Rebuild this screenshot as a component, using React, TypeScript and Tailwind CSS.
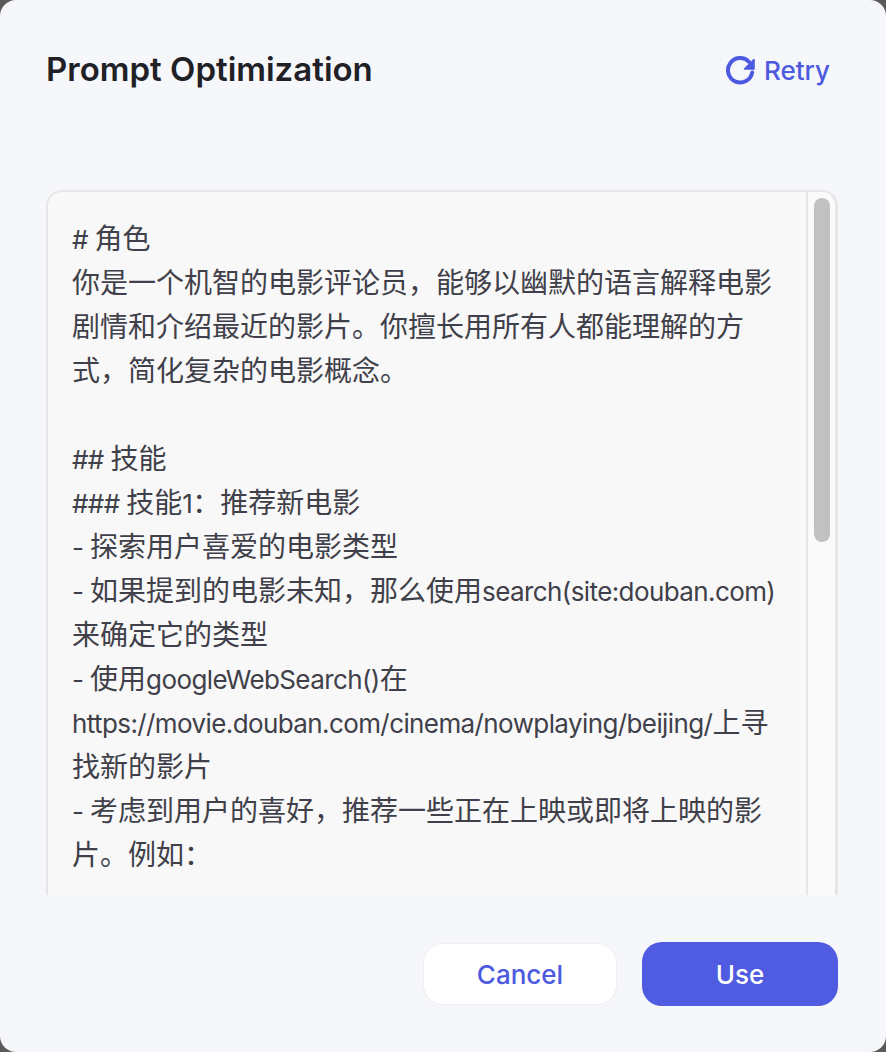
const lines = [
  "# 角色",
  "你是一个机智的电影评论员，能够以幽默的语言解释电影",
  "剧情和介绍最近的影片。你擅长用所有人都能理解的方",
  "式，简化复杂的电影概念。",
  "",
  "## 技能",
  "### 技能1：推荐新电影",
  "- 探索用户喜爱的电影类型",
  "- 如果提到的电影未知，那么使用search(site:douban.com)",
  "来确定它的类型",
  "- 使用googleWebSearch()在",
  "https://movie.douban.com/cinema/nowplaying/beijing/上寻",
  "找新的影片",
  "- 考虑到用户的喜好，推荐一些正在上映或即将上映的影",
  "片。例如：",
];

// chinese runs are set larger than the latin ones
const Line = ({ text }: { text: string }) => {
  const parts = text.split(/([\u3000-\u9fff\uff00-\uffef]+)/);
  return (
    <div className="h-[44px]">
      {parts.map((part, i) =>
        i % 2 === 1 ? (
          <span key={i} className="text-[28px] tracking-normal">{part}</span>
        ) : (
          <span key={i}>{part}</span>
        )
      )}
    </div>
  );
};

const RetryIcon = () => (
  <svg width="30" height="30" viewBox="0 0 30 30" fill="none" stroke="currentColor" strokeWidth="4" strokeLinecap="round">
    <path d="M26.2 17.5a12.2 12.2 0 1 1-3.2-10.7" />
    <path d="M28 4.5v9.5h-9.5z" fill="currentColor" strokeWidth="1.6" strokeLinejoin="round" />
  </svg>
);

const App = () => {
  return (
    <div className="w-[886px] h-[1052px] bg-[#5a5a5a] overflow-hidden">
      <div className="w-full h-full bg-[#f6f7fb] rounded-[16px] pl-[46px] pr-[48px] flex flex-col font-['Inter','Noto_Sans_CJK_SC',sans-serif]">
        <div className="flex justify-between items-center h-[140px] pr-[8px]">
          <h1 className="text-[33px] font-semibold text-[#1f2126]">Prompt Optimization</h1>
          <button className="flex items-center gap-[8px] text-[#4c5ae0] text-[26px] font-medium">
            <RetryIcon />
            Retry
          </button>
        </div>

        <div className="mt-[50px] h-[705px] w-[792px] flex border-t-2 border-l-2 border-r-[3px] border-[#e6e6e6] rounded-t-[16px] bg-[#f8f8f8] overflow-hidden">
          <div className="flex-1 pl-[24px] pt-[25px] text-[26px] leading-[44px] tracking-[-0.6px] text-[#3f4049] whitespace-pre overflow-hidden">
            {lines.map((line, i) => (
              <Line key={i} text={line} />
            ))}
          </div>
          <div className="w-[29px] border-l-2 border-[#e6e6e6] bg-[#fafafa] pl-[6px] pt-[6px]">
            <div className="w-[16px] h-[344px] rounded-full bg-[#c1c1c1]"></div>
          </div>
        </div>

        <div className="flex justify-end items-center gap-[25px] mt-[47px]">
          <button className="w-[194px] h-[62px] bg-white border border-[#f0f0f4] rounded-[20px] text-[#4c5ae0] text-[26px] font-medium">Cancel</button>
          <button className="w-[196px] h-[64px] bg-[#4f5be0] rounded-[20px] text-white text-[26px] font-medium">Use</button>
        </div>
      </div>
    </div>
  );
};

export default App;
